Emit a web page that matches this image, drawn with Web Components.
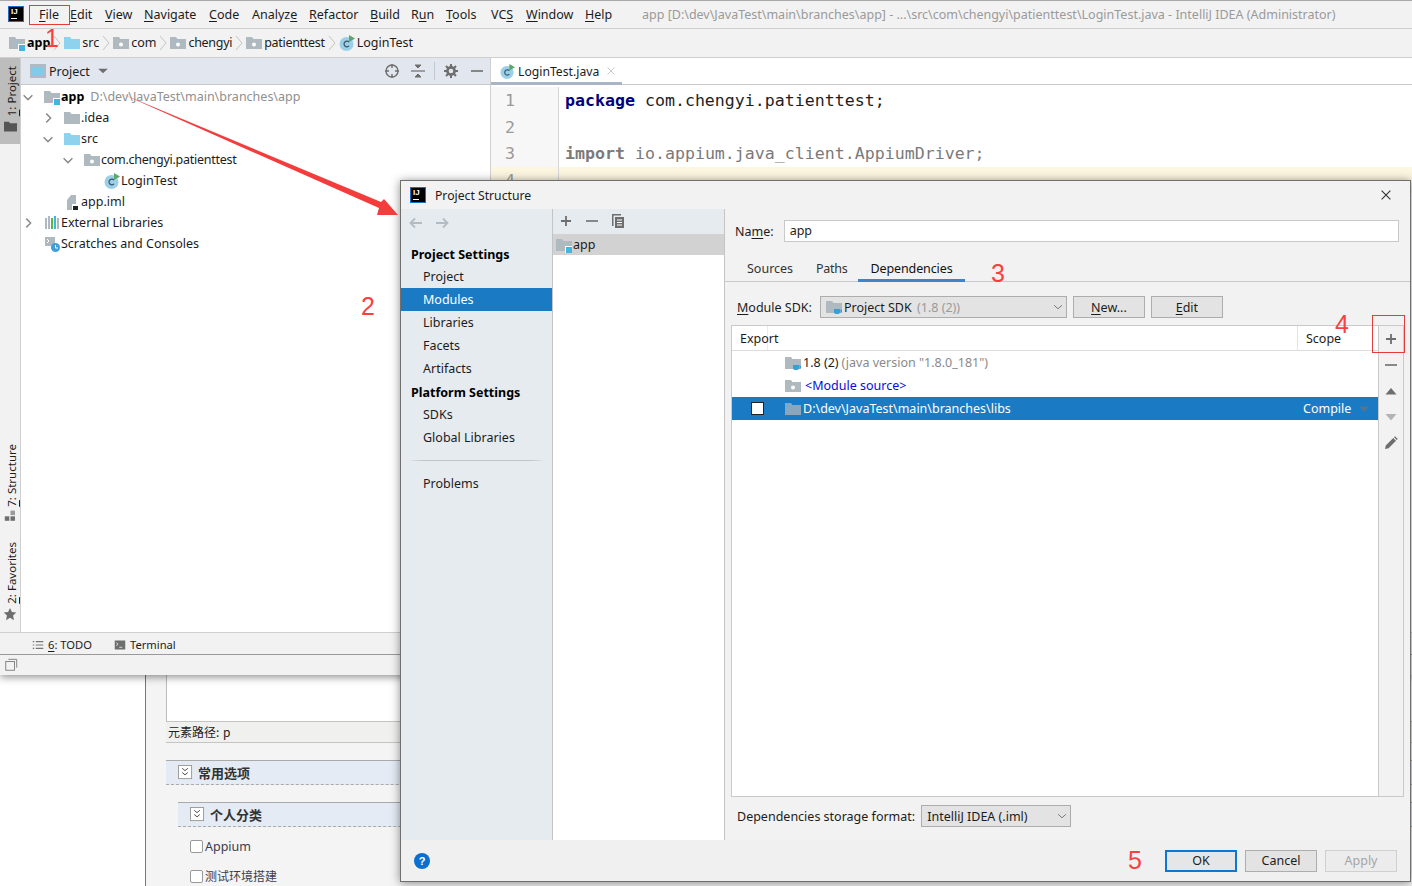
<!DOCTYPE html>
<html>
<head>
<meta charset="utf-8">
<title>Project Structure</title>
<style>
  html, body { margin: 0; height: 100%; overflow: hidden; background: #fff; }
  body { font-family: "Noto Sans", "Noto Sans CJK SC", sans-serif; font-size: 12.5px; color: #1c1c1c; }
  desktop-area { display: block; position: relative; width: 1412px; height: 886px; overflow: hidden; }
</style>
</head>
<body>
<desktop-area>
  <behind-page></behind-page>
  <ide-window></ide-window>
  <structure-dialog></structure-dialog>
  <red-notes></red-notes>
</desktop-area>

<script>
'use strict';

/* ── Icons ─────────────────────────────────────────── */
const FOLDER = 'M0 2h6l1.500 2H16v10H0z';
const ICONS = {
  folder: `<path d="${FOLDER}" fill="#aeb9c0"/>`,
  src: `<path d="${FOLDER}" fill="#8ed2ee"/>`,
  pkg: `<path d="${FOLDER}" fill="#aeb9c0"/><circle cx="8" cy="9.500" r="2" fill="#fff"/>`,
  module: `<path d="${FOLDER}" fill="#aeb9c0"/><rect x="9" y="9" width="7" height="7" fill="#fff"/><rect x="10" y="10" width="6" height="6" fill="#40b6e0"/>`,
  cls: `<circle cx="7.500" cy="9" r="7" fill="#9ccfe8"/><path d="M10 7.200A2.800 2.800 0 1 0 10 10.800" fill="none" stroke="#3a5568" stroke-width="1.200"/><path d="M10 0l6 3.500-6 3.500z" fill="#59a869"/>`,
  iml: `<path d="M3 6l4-5h5v9H8v6H3z" fill="#aeb9c0"/><rect x="8" y="10" width="7" height="6" fill="#fff"/><rect x="9" y="12" width="5" height="4" fill="#222"/>`,
  libs: `<rect x="1" y="3" width="2" height="11" fill="#aeb9c0"/><rect x="4" y="1" width="2" height="13" fill="#aeb9c0"/><rect x="7" y="3" width="2" height="11" fill="#62b543"/><rect x="10" y="1" width="2" height="13" fill="#40b6e0"/><rect x="13" y="3" width="2" height="11" fill="#aeb9c0"/>`,
  scratch: `<rect x="1" y="1" width="10" height="9" fill="#aeb9c0"/><path d="M3 3l2 2-2 2" fill="none" stroke="#fff" stroke-width="1"/><circle cx="11.500" cy="11.500" r="4.500" fill="#3f9fd8"/><path d="M11.500 9v3h2.500" fill="none" stroke="#fff"/>`,
  jdk: `<path d="${FOLDER}" fill="#aeb9c0"/><path d="M8 10h6v3a2 2 0 0 1-2 2h-2a2 2 0 0 1-2-2z" fill="#389fd6"/><path d="M14 11h1.500v2H14" fill="none" stroke="#389fd6"/>`,
  selfolder: `<path d="${FOLDER}" fill="#8ba6bb"/>`,
  projview: `<rect x="0" y="1" width="16" height="14" fill="#9aa7b0" opacity=".7"/><rect x="2" y="4" width="12" height="9" fill="#7fcbea"/>`,
  locate: `<circle cx="8" cy="8" r="6" fill="none" stroke="#6e6e6e" stroke-width="1.400"/><path d="M8 1v4M8 11v4M1 8h4M11 8h4" stroke="#6e6e6e" stroke-width="1.400"/>`,
  collapse: `<path d="M1 8h14" stroke="#6e6e6e" stroke-width="1.200"/><path d="M5 2l3 3 3-3zM5 14l3-3 3 3z" fill="#6e6e6e" stroke="#6e6e6e"/>`,
  gear: `<circle cx="8" cy="8" r="3.600" fill="none" stroke="#6e6e6e" stroke-width="2.600"/><path d="M8 1v3M8 12v3M1 8h3M12 8h3M3 3l2 2M11 11l2 2M13 3l-2 2M5 11l-2 2" stroke="#6e6e6e" stroke-width="2"/>`,
  minus: `<path d="M2 8h12" stroke="#6e6e6e" stroke-width="1.600"/>`,
  plus: `<path d="M3 8h10M8 3v10" stroke="#6e6e6e" stroke-width="1.800"/>`,
  copy: `<path d="M2 1h9v1.500H3.500V13H2z" fill="#6e6e6e"/><rect x="5" y="4" width="9" height="11" fill="#6e6e6e"/><path d="M7 7h5M7 9.500h5M7 12h5" stroke="#fff"/>`,
  back: `<path d="M14 8H3M7 3.500L2.500 8 7 12.500" fill="none" stroke="#b4bcc3" stroke-width="1.800"/>`,
  forward: `<path d="M2 8h11M9 3.500L13.500 8 9 12.500" fill="none" stroke="#b4bcc3" stroke-width="1.800"/>`,
  down: `<path d="M3 6l5 5 5-5" fill="none" stroke="#8c8c8c" stroke-width="1.700"/>`,
  right: `<path d="M6 3l5 5-5 5" fill="none" stroke="#8c8c8c" stroke-width="1.700"/>`,
  crumb: `<path d="M5 1l6 7-6 7" fill="none" stroke="#c4c4c4" stroke-width="1"/>`,
  caret: `<path d="M2.500 5.500h11L8 10.500z" fill="#6e6e6e"/>`,
  combo: `<path d="M3.500 6l4.500 4 4.500-4" fill="none" stroke="#777" stroke-width="1.100"/>`,
  close: `<path d="M3 3l10 10M13 3L3 13" stroke="#2b2b2b" stroke-width="1.200"/>`,
  tabclose: `<path d="M4 4l8 8M12 4l-8 8" stroke="#c0c4c8" stroke-width="1"/>`,
  up: `<path d="M2.500 11.500h11L8 5z" fill="#6e6e6e"/>`,
  dn: `<path d="M2.500 5h11L8 11.500z" fill="#b4b4b4"/>`,
  dnsel: `<path d="M2.500 5h11L8 11.500z" fill="#55758f"/>`,
  pen: `<path d="M2 14l.8-3.600 7.400-7.400 2.800 2.800-7.400 7.400zM11 2.200l1-1 2.800 2.800-1 1z" fill="#6e6e6e"/>`,
  todo: `<path d="M5 3.500h10M5 8h10M5 12.500h10M1 3.500h2M1 8h2M1 12.500h2" stroke="#777" stroke-width="1.600"/>`,
  term: `<rect x="1" y="2" width="14" height="12" fill="#6e6e6e"/><path d="M3 5l2.500 2L3 9M7 11h4" fill="none" stroke="#fff"/>`,
  layout: `<path d="M5 1.500h9.500V11" fill="none" stroke="#777"/><rect x="2" y="4" width="10" height="10" fill="none" stroke="#777"/>`,
  pfolder: `<path d="${FOLDER}" fill="#555"/>`,
  struct: `<rect x="1" y="9" width="5.500" height="5.500" fill="#6e6e6e"/><rect x="8" y="9" width="5.500" height="5.500" fill="#6e6e6e"/><rect x="8" y="2" width="5.500" height="5.500" fill="#9a9a9a"/>`,
  star: `<path d="M8 1l2.200 4.700 5 .6-3.700 3.500 1 5.200L8 12.400 3.500 15l1-5.200L.8 6.300l5-.6z" fill="#6e6e6e"/>`,
  expand: `<rect x=".5" y=".5" width="14" height="14" fill="#fff" stroke="#999"/><path d="M4.500 3.500l3 2.500 3-2.500M4.500 8l3 2.500 3-2.500" fill="none" stroke="#444"/>`
};

class IdeIcon extends HTMLElement {
  connectedCallback() {
    const size = this.getAttribute('size') || 16;
    if (!this.shadowRoot) this.attachShadow({ mode: 'open' });
    this.shadowRoot.innerHTML = `
      <style>:host { display: inline-flex; flex: none; width: ${size}px; height: ${size}px; } svg { display: block; }</style>
      <svg width="${size}" height="${size}" viewBox="0 0 16 16">${ICONS[this.getAttribute('name')] || ''}</svg>`;
  }
}
customElements.define('ide-icon', IdeIcon);

class IjLogo extends HTMLElement {
  constructor() {
    super();
    this.attachShadow({ mode: 'open' }).innerHTML = `
      <style>
        :host { display: block; flex: none; width: 16px; height: 16px; background: #000; box-sizing: border-box; border: 1px solid #1a6fc0; position: relative; overflow: hidden; }
        b { position: absolute; left: 2px; top: 0; font: bold 8px/9px "Liberation Sans", sans-serif; color: #fff; letter-spacing: 0; }
        i { position: absolute; left: 2px; bottom: 2px; width: 6px; height: 1px; background: #fff; }
      </style><b>IJ</b><i></i>`;
  }
}
customElements.define('ij-logo', IjLogo);

/* ── Menu entry: width keeps the entry on its column ── */
class MenuEntry extends HTMLElement {
  constructor() {
    super();
    this.attachShadow({ mode: 'open' }).innerHTML = `
      <style>:host { display: block; flex: none; white-space: nowrap; }</style><slot></slot>`;
  }
}
customElements.define('menu-entry', MenuEntry);

/* ── Project tree row ──────────────────────────────── */
class TreeRow extends HTMLElement {
  constructor() {
    super();
    const depth = +this.getAttribute('depth') || 0;
    const arrow = this.getAttribute('arrow');
    this.attachShadow({ mode: 'open' }).innerHTML = `
      <style>
        :host { display: flex; align-items: center; height: 21px; padding-left: ${depth * 20}px; white-space: nowrap; }
        .ar { width: 20px; display: flex; justify-content: center; margin-left: -3px; margin-right: 6px; flex: none; }
        .lb { margin-left: 1px; }
      </style>
      <span class="ar">${arrow ? `<ide-icon name="${arrow}" size="14"></ide-icon>` : ''}</span>
      <ide-icon name="${this.getAttribute('icon')}"></ide-icon>
      <span class="lb"><slot></slot></span>`;
  }
}
customElements.define('tree-row', TreeRow);

/* ── Main IDE window ───────────────────────────────── */
class IdeWindow extends HTMLElement {
  constructor() {
    super();
    const menu = [['F','ile',31],['E','dit',35],['V','iew',39],['N','avigate',65],['C','ode',43],['','Analyze',57],['R','efactor',61],['B','uild',41],['R','un',35],['T','ools',45],['','VCS',35],['W','indow',59],['H','elp',57]];
    const underlineAt = { Analyze: 6, VCS: 2, Run: 1 };
    const entries = menu.map(([k, rest, w]) => {
      const word = k + rest;
      let html = k ? `<u>${k}</u>${rest}` : word;
      if (underlineAt[word] !== undefined) {
        const i = underlineAt[word];
        html = `${word.slice(0, i)}<u>${word[i]}</u>${word.slice(i + 1)}`;
      }
      return `<menu-entry style="width:${w}px">${html}</menu-entry>`;
    }).join('');

    this.attachShadow({ mode: 'open' }).innerHTML = `
      <style>
        :host { position: absolute; left: 0; top: 0; width: 1412px; height: 675px; display: flex; flex-direction: column; background: #f2f2f2; box-shadow: 0 2px 8px rgba(0,0,0,.45); border-top: 1px solid #a8a8a8; box-sizing: border-box; }
        u { text-underline-offset: 2px; }
        .menubar { height: 28px; flex: none; display: flex; align-items: center; box-sizing: border-box; border-bottom: 1px solid #cfcfcf; padding: 0 0 1px 8px; }
        .menubar ij-logo { margin-right: 15px; }
        .wintitle { color: #9a9a9a; white-space: nowrap; margin-left: 0; }
        .crumbs { height: 29px; flex: none; display: flex; align-items: center; box-sizing: border-box; border-bottom: 1px solid #cfcfcf; padding: 0 0 1px 9px; white-space: nowrap; }
        .crumbs span { margin-left: 2px; }
        .crumbs .nr { letter-spacing: -.3px; }
        .crumbs ide-icon[name=crumb] { margin: 0 -1px 0 -1px; }
        .crumbs b { margin-left: 2px; font-weight: 700; color: #000; }
        .main { flex: 1; min-height: 0; display: flex; }
        .stripe { width: 20px; flex: none; border-right: 1px solid #cfcfcf; display: flex; flex-direction: column; align-items: center; font-size: 11.500px; }
        .stripe .vt { writing-mode: vertical-rl; transform: rotate(180deg); white-space: nowrap; margin-left: 2px; }
        .stripe u { text-underline-offset: 1px; }
        .stripe .on { align-self: stretch; background: #bdbdbd; height: 86px; display: flex; flex-direction: column; align-items: center; justify-content: flex-end; padding-bottom: 11px; box-sizing: border-box; gap: 4px; }
        .stripe .grp { display: flex; flex-direction: column; align-items: center; gap: 3px; }
        .stripe .sp { flex: 1; }
        .project { width: 469px; flex: none; border-right: 1px solid #cfcfcf; display: flex; flex-direction: column; background: #fff; }
        .phead { height: 27px; flex: none; box-sizing: border-box; background: #e2e6ee; border-bottom: 1px solid #c9c9c9; display: flex; align-items: center; padding-left: 9px; }
        .phead .t { margin-left: 3px; margin-right: 6px; }
        .phead .sp { flex: 1; }
        .phead .div { width: 1px; height: 18px; background: #c4c8cf; margin: 0 8px 0 8px; }
        .tree { padding-top: 1px; }
        .tree b { font-weight: 700; color: #000; }
        .tree .path { color: #8f8f8f; margin-left: 6px; }
        .tree .nr { letter-spacing: -.26px; }
        .editor { flex: 1; min-width: 0; display: flex; flex-direction: column; background: #fff; }
        .tabs { height: 27px; flex: none; box-sizing: border-box; border-bottom: 1px solid #c9c9c9; display: flex; }
        .tab { width: 131px; box-sizing: border-box; background: #fff; border-bottom: 3px solid #a9b4c6; display: flex; align-items: center; padding: 2px 0 0 9px; gap: 3px; white-space: nowrap; font-size: 12.200px; height: 27px; }
        .tab ide-icon:last-child { margin-left: 2px; }
        .code { flex: 1; display: flex; flex-direction: column; padding-top: 2px; font: 16.600px/26.600px "DejaVu Sans Mono", monospace; color: #1e1e1e; white-space: pre; }
        .ln { display: flex; height: 26.600px; }
        .ln.cur { background: #fcf6e1; }
        .ln i { width: 68px; flex: none; box-sizing: border-box; border-right: 1px solid #d6d6d6; background: #f7f7f7; color: #9a9a9a; font-style: normal; padding: 1px 0 0 14px; margin-right: 6px; }
        .ln span { padding-top: 1px; }
        .ln.cur i { background: #fcf6e1; }
        .ln b { color: #000080; }
        .ln.imp { color: #7a7a7a; }
        .ln.imp b { color: #7a7a7a; }
        .gutterfill { flex: 1; width: 68px; box-sizing: border-box; border-right: 1px solid #d6d6d6; background: #f7f7f7; }
        .bottom { flex: none; box-sizing: border-box; border-top: 1px solid #cfcfcf; border-bottom: 1px solid #9a9a9a; display: flex; align-items: center; padding: 2px 0 0 32px; font-size: 11.200px; height: 23px; }
        .bottom span { margin-left: 4px; margin-right: 22px; }
        .status { height: 20px; flex: none; display: flex; align-items: center; padding-left: 4px; }
      </style>
      <div class="menubar">
        <ij-logo></ij-logo>
        ${entries}
        <div class="wintitle">app [D:\\dev\\JavaTest\\main\\branches\\app] - ...\\src\\com\\chengyi\\patienttest\\LoginTest.java - IntelliJ IDEA (Administrator)</div>
      </div>
      <div class="crumbs">
        <ide-icon name="module"></ide-icon><b>app</b><ide-icon name="crumb"></ide-icon>
        <ide-icon name="src"></ide-icon><span>src</span><ide-icon name="crumb"></ide-icon>
        <ide-icon name="pkg"></ide-icon><span>com</span><ide-icon name="crumb"></ide-icon>
        <ide-icon name="pkg"></ide-icon><span class="nr">chengyi</span><ide-icon name="crumb"></ide-icon>
        <ide-icon name="pkg"></ide-icon><span class="nr">patienttest</span><ide-icon name="crumb"></ide-icon>
        <ide-icon name="cls"></ide-icon><span>LoginTest</span>
      </div>
      <div class="main">
        <div class="stripe">
          <div class="on"><span class="vt"><u>1</u>: Project</span><ide-icon name="pfolder" size="13"></ide-icon></div>
          <div class="sp"></div>
          <div class="grp"><span class="vt"><u>7</u>: Structure</span><ide-icon name="struct" size="13"></ide-icon></div>
          <div class="grp" style="margin:20px 0 11px"><span class="vt"><u>2</u>: Favorites</span><ide-icon name="star" size="14"></ide-icon></div>
        </div>
        <div class="project">
          <div class="phead">
            <ide-icon name="projview"></ide-icon><span class="t">Project</span><ide-icon name="caret" size="14"></ide-icon>
            <div class="sp"></div>
            <ide-icon name="locate"></ide-icon><span style="width:10px"></span><ide-icon name="collapse"></ide-icon>
            <div class="div"></div><ide-icon name="gear"></ide-icon><span style="width:10px"></span><ide-icon name="minus"></ide-icon><span style="width:5px"></span>
          </div>
          <div class="tree">
            <tree-row depth="0" arrow="down" icon="module"><b>app</b><span class="path">D:\\dev\\JavaTest\\main\\branches\\app</span></tree-row>
            <tree-row depth="1" arrow="right" icon="folder">.idea</tree-row>
            <tree-row depth="1" arrow="down" icon="src">src</tree-row>
            <tree-row depth="2" arrow="down" icon="pkg"><span class="nr">com.chengyi.patienttest</span></tree-row>
            <tree-row depth="3" icon="cls">LoginTest</tree-row>
            <tree-row depth="1" icon="iml">app.iml</tree-row>
            <tree-row depth="0" arrow="right" icon="libs">External Libraries</tree-row>
            <tree-row depth="0" icon="scratch">Scratches and Consoles</tree-row>
          </div>
        </div>
        <div class="editor">
          <div class="tabs"><div class="tab"><ide-icon name="cls" size="15"></ide-icon><span>LoginTest.java</span><ide-icon name="tabclose" size="14"></ide-icon></div></div>
          <div class="code">
            <div class="ln"><i>1</i><span><b>package</b> com.chengyi.patienttest;</span></div>
            <div class="ln"><i>2</i></div>
            <div class="ln imp"><i>3</i><span><b>import</b> io.appium.java_client.AppiumDriver;</span></div>
            <div class="ln cur"><i>4</i></div>
            <div class="gutterfill"></div>
          </div>
        </div>
      </div>
      <div class="bottom"><ide-icon name="todo" size="12"></ide-icon><span><u>6</u>: TODO</span><ide-icon name="term" size="12"></ide-icon><span>Terminal</span></div>
      <div class="status"><ide-icon name="layout" size="14"></ide-icon></div>`;
  }
}
customElements.define('ide-window', IdeWindow);

/* ── Dialog parts ──────────────────────────────────── */
class NavItem extends HTMLElement {
  constructor() {
    super();
    this.attachShadow({ mode: 'open' }).innerHTML = `
      <style>
        :host { display: flex; align-items: center; height: 23px; padding-left: 22px; color: #1c1c1c; white-space: nowrap; }
        :host([head]) { height: 22px; padding-left: 10px; font-weight: 700; color: #000; }
        :host([selected]) { background: #1a7bc4; color: #fff; }
      </style><slot></slot>`;
  }
}
customElements.define('nav-item', NavItem);

class IdeButton extends HTMLElement {
  constructor() {
    super();
    this.attachShadow({ mode: 'open' }).innerHTML = `
      <style>
        :host { display: flex; align-items: center; justify-content: center; flex: none; width: 72px; height: 22px; box-sizing: border-box; background: #e3e3e3; border: 1px solid #adadad; color: #1c1c1c; }
        :host([primary]) { border: 2px solid #0a78d6; background: #e6e6e6; }
        :host([disabled]) { background: #ececec; border-color: #d0d0d0; color: #a6a6a6; }
      </style><slot></slot>`;
  }
}
customElements.define('ide-button', IdeButton);

class IdeCombo extends HTMLElement {
  constructor() {
    super();
    this.attachShadow({ mode: 'open' }).innerHTML = `
      <style>
        :host { display: flex; align-items: center; flex: none; height: 22px; box-sizing: border-box; background: #e3e3e3; border: 1px solid #adadad; padding-left: 5px; white-space: nowrap; }
        .v { flex: 1; display: flex; align-items: center; gap: 2px; }
      </style><div class="v"><slot></slot></div><ide-icon name="combo" size="14" style="margin-right:1px"></ide-icon>`;
  }
}
customElements.define('ide-combo', IdeCombo);

/* Dependencies table with its side toolbar */
class DepTable extends HTMLElement {
  constructor() {
    super();
    this.attachShadow({ mode: 'open' }).innerHTML = `
      <style>
        :host { display: flex; flex: none; height: 472px; width: 673px; box-sizing: border-box; border: 1px solid #c9c9c9; background: #fff; }
        .list { flex: 1; min-width: 0; display: flex; flex-direction: column; }
        .hd { height: 25px; flex: none; box-sizing: border-box; border-bottom: 1px solid #dcdcdc; display: flex; align-items: center; }
        .hd .ex { width: 36px; box-sizing: border-box; padding-left: 8px; border-right: 1px solid #eaeaea; height: 100%; line-height: 25px; }
        .hd .gap { flex: 1; }
        .hd .sc { width: 81px; box-sizing: border-box; padding-left: 8px; border-left: 1px solid #e4e4e4; height: 100%; line-height: 25px; }
        .row { height: 23px; display: flex; align-items: center; padding-left: 53px; white-space: nowrap; }
        .row span { margin-left: 2px; }
        .row em { font-style: normal; color: #8a8a8a; margin-left: 3px; }
        .src { color: #0a0ae0; }
        .sel { background: #1a7bc4; color: #fff; position: relative; }
        .cb { position: absolute; left: 19px; top: 5px; width: 11px; height: 11px; background: #fff; border: 1px solid #222; }
        .sc2 { margin-left: auto; width: 77px; flex: none; display: flex; align-items: center; }
        .tb { width: 24px; flex: none; border-left: 1px solid #c9c9c9; background: #f2f2f2; display: flex; flex-direction: column; align-items: center; padding-top: 5px; gap: 10px; }
      </style>
      <div class="list">
        <div class="hd"><div class="ex">Export</div><div class="gap"></div><div class="sc">Scope</div></div>
        <div class="rows">
          <div class="row"><ide-icon name="jdk"></ide-icon><span>1.8 (2)</span><em>(java version "1.8.0_181")</em></div>
          <div class="row"><ide-icon name="pkg"></ide-icon><span class="src" style="margin-left:4px">&lt;Module source&gt;</span></div>
          <div class="row sel"><div class="cb"></div><ide-icon name="selfolder"></ide-icon><span>D:\\dev\\JavaTest\\main\\branches\\libs</span><div class="sc2"><span>Compile</span><ide-icon name="dnsel" size="14" style="margin-left:6px"></ide-icon></div></div>
        </div>
      </div>
      <div class="tb">
        <ide-icon name="plus"></ide-icon><ide-icon name="minus"></ide-icon><ide-icon name="up"></ide-icon><ide-icon name="dn"></ide-icon><ide-icon name="pen"></ide-icon>
      </div>`;
  }
}
customElements.define('dep-table', DepTable);

class StructureDialog extends HTMLElement {
  constructor() {
    super();
    this.attachShadow({ mode: 'open' }).innerHTML = `
      <style>
        :host { position: absolute; left: 400px; top: 180px; width: 1011px; height: 702px; box-sizing: border-box; border: 1px solid #6f6f6f; background: #f2f2f2; display: flex; flex-direction: column; box-shadow: 0 1px 9px rgba(0,0,0,.45); }
        u { text-underline-offset: 2px; }
        .title { height: 28px; flex: none; display: flex; align-items: center; padding: 0 17px 0 9px; gap: 9px; font-size: 12.200px; }
        .title .sp { flex: 1; }
        .body { flex: 1; min-height: 0; display: flex; }
        .side { width: 151px; flex: none; border-right: 1px solid #c4c4c4; background: #e6ebf0; }
        .arrows { height: 34px; display: flex; align-items: center; gap: 10px; padding: 0 0 7px 7px; box-sizing: border-box; }
        .sep { height: 1px; background: linear-gradient(90deg, transparent, #c2c6ca 10%, #c2c6ca 90%, transparent); margin: 11px 7px 11px 7px; }
        .mods { width: 171px; flex: none; border-right: 1px solid #c4c4c4; background: #fff; display: flex; flex-direction: column; }
        .mtb { height: 25px; flex: none; box-sizing: border-box; background: #e6ebf0; display: flex; align-items: center; padding: 0 0 2px 5px; gap: 10px; }
        .msel { height: 21px; background: #d2d2d2; display: flex; align-items: center; padding-left: 3px; gap: 1px; }
        .right { flex: 1; min-width: 0; display: flex; flex-direction: column; }
        .name { display: flex; align-items: center; height: 22px; margin: 11px 11px 0 10px; gap: 10px; flex: none; }
        .name .inp { flex: 1; height: 22px; box-sizing: border-box; border: 1px solid #c9c9c9; background: #fff; padding-left: 5px; line-height: 20px; }
        .tabs { display: flex; height: 30px; margin-top: 10px; box-sizing: border-box; border-bottom: 1px solid #c9c9c9; padding-left: 10px; flex: none; }
        .tabs div { padding: 0 12px; line-height: 34px; position: relative; color: #333; }
        .tabs .on { color: #111; border-bottom: 3px solid #4083c9; height: 30px; box-sizing: border-box; margin-bottom: -1px; letter-spacing: -.1px; }
        .sdk { display: flex; align-items: center; height: 22px; margin: 14px 0 0 12px; flex: none; white-space: nowrap; }
        .sdk ide-combo { width: 247px; margin: 0 6px 0 8px; }
        .sdk ide-button + ide-button { margin-left: 6px; }
        .sdk em { font-style: normal; color: #9a9a9a; margin-left: 2px; }
        dep-table { margin: 7px 0 0 6px; }
        .store { display: flex; align-items: center; height: 22px; margin: 8px 0 0 12px; flex: none; white-space: nowrap; }
        .store ide-combo { width: 150px; margin-left: 6px; }
        .foot { height: 41px; flex: none; display: flex; align-items: center; padding: 0 13px 0 13px; gap: 8px; background: #f0f0f0; }
        .foot .sp { flex: 1; }
        .q { width: 16px; height: 16px; border-radius: 50%; background: #0b6fd0; color: #fff; font: bold 11px/16px "Liberation Sans", sans-serif; text-align: center; }
      </style>
      <div class="title"><ij-logo></ij-logo><span>Project Structure</span><div class="sp"></div><ide-icon name="close" size="14"></ide-icon></div>
      <div class="body">
        <div class="side">
          <div class="arrows"><ide-icon name="back"></ide-icon><ide-icon name="forward"></ide-icon></div>
          <nav-item head>Project Settings</nav-item>
          <nav-item>Project</nav-item>
          <nav-item selected>Modules</nav-item>
          <nav-item>Libraries</nav-item>
          <nav-item>Facets</nav-item>
          <nav-item>Artifacts</nav-item>
          <nav-item head style="margin-top:1px">Platform Settings</nav-item>
          <nav-item>SDKs</nav-item>
          <nav-item>Global Libraries</nav-item>
          <div class="sep"></div>
          <nav-item>Problems</nav-item>
        </div>
        <div class="mods">
          <div class="mtb"><ide-icon name="plus"></ide-icon><ide-icon name="minus"></ide-icon><ide-icon name="copy"></ide-icon></div>
          <div class="msel"><ide-icon name="module"></ide-icon><span>app</span></div>
        </div>
        <div class="right">
          <div class="name"><span>Na<u>m</u>e:</span><div class="inp">app</div></div>
          <div class="tabs"><div>Sources</div><div style="padding:0 11px 0 11px;letter-spacing:-.3px">Paths</div><div class="on">Dependencies</div></div>
          <div class="sdk"><span><u>M</u>odule SDK:</span>
            <ide-combo><ide-icon name="jdk"></ide-icon><span>Project SDK <em>(1.8 (2))</em></span></ide-combo>
            <ide-button><span><u>N</u>ew...</span></ide-button><ide-button><span><u>E</u>dit</span></ide-button>
          </div>
          <dep-table></dep-table>
          <div class="store"><span>Dependencies storage format:</span><ide-combo><span>IntelliJ IDEA (.iml)</span></ide-combo></div>
          <div style="flex:1"></div>
        </div>
      </div>
      <div class="foot"><div class="q">?</div><div class="sp"></div><ide-button primary>OK</ide-button><ide-button>Cancel</ide-button><ide-button disabled>Apply</ide-button></div>`;
  }
}
customElements.define('structure-dialog', StructureDialog);

/* ── The web page behind the IDE ───────────────────── */
class BehindPage extends HTMLElement {
  constructor() {
    super();
    this.attachShadow({ mode: 'open' }).innerHTML = `
      <style>
        :host { position: absolute; inset: 0; display: flex; font-family: "Noto Sans CJK SC", "Noto Sans", sans-serif; font-size: 12px; color: #222; background: #fff; }
        .gutter { width: 145px; flex: none; border-right: 1px solid #777; }
        .col { flex: 1; background: #f4f4f4; padding-left: 20px; display: flex; flex-direction: column; }
        .edit { height: 722px; flex: none; box-sizing: border-box; background: #fff; border-left: 1px solid #bbb; border-bottom: 1px solid #c4c4c4; }
        .path { height: 21px; flex: none; box-sizing: border-box; background: #f0f0ee; border-bottom: 1px solid #c4c4c4; padding-left: 2px; line-height: 20px; }
        .path em { font-style: normal; margin-left: 1px; }
        .sec { height: 25px; flex: none; box-sizing: border-box; background: #e4ebf4; border-top: 1px solid #aaa; border-bottom: 1px dashed #aaa; display: flex; align-items: center; padding-left: 12px; gap: 5px; font-weight: 700; font-size: 13px; margin-top: 17px; color: #333; }
        .sec.in { margin-left: 12px; }
        .chk { display: flex; align-items: center; margin-left: 24px; height: 14px; color: #3c3c50; font-size: 12.500px; font-family: "Noto Sans", "Noto Sans CJK SC", sans-serif; }
        .chk.zh { font-size: 12px; }
        .chk i { width: 11px; height: 11px; border: 1px solid #999; border-radius: 2px; background: #fff; margin-right: 2px; }
      </style>
      <div class="gutter"></div>
      <div class="col">
        <div class="edit"></div>
        <div class="path">元素路径:<em> p</em></div>
        <div class="sec"><ide-icon name="expand" size="15"></ide-icon>常用选项</div>
        <div class="sec in"><ide-icon name="expand" size="15"></ide-icon>个人分类</div>
        <div class="chk" style="margin-top:12px"><i></i>Appium</div>
        <div class="chk zh" style="margin-top:16px"><i></i>测试环境搭建</div>
      </div>`;
  }
}
customElements.define('behind-page', BehindPage);

/* ── Red annotations over the whole screenshot ─────── */
class RedNotes extends HTMLElement {
  constructor() {
    super();
    const num = (n, x, y) => `<span class="n" style="left:${x}px;top:${y}px">${n}</span>`;
    this.attachShadow({ mode: 'open' }).innerHTML = `
      <style>
        :host { position: absolute; inset: 0; pointer-events: none; }
        svg { position: absolute; left: 0; top: 0; }
        .n { position: absolute; font: 25px/28px "Liberation Sans", sans-serif; color: #f94040; }
        .box { position: absolute; box-sizing: border-box; border: 1px solid #e83a3a; }
      </style>
      <div class="box" style="left:29px;top:5px;width:41px;height:20px"></div>
      <div class="box" style="left:1372px;top:315px;width:33px;height:38px"></div>
      <svg width="1412" height="886"><polygon points="120,93 381,202 384,199 398,215 377,215 379,208" fill="#f43c3c"/></svg>
      ${num(1, 45, 24)}${num(2, 361, 292)}${num(3, 991, 259)}${num(4, 1335, 310)}${num(5, 1128, 846)}`;
  }
}
customElements.define('red-notes', RedNotes);
</script>
</body>
</html>
